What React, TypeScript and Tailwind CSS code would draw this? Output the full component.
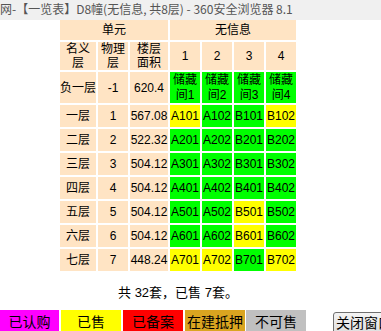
import React from "react";

type Cell = { t: string; c: "g" | "y" };

const rows: { n: string; p: string; a: string; cells: Cell[] }[] = [
  { n: "一层", p: "1", a: "567.08", cells: [{ t: "A101", c: "y" }, { t: "A102", c: "g" }, { t: "B101", c: "g" }, { t: "B102", c: "y" }] },
  { n: "二层", p: "2", a: "522.32", cells: [{ t: "A201", c: "g" }, { t: "A202", c: "g" }, { t: "B201", c: "g" }, { t: "B202", c: "g" }] },
  { n: "三层", p: "3", a: "504.12", cells: [{ t: "A301", c: "g" }, { t: "A302", c: "g" }, { t: "B301", c: "g" }, { t: "B302", c: "g" }] },
  { n: "四层", p: "4", a: "504.12", cells: [{ t: "A401", c: "g" }, { t: "A402", c: "g" }, { t: "B401", c: "g" }, { t: "B402", c: "g" }] },
  { n: "五层", p: "5", a: "504.12", cells: [{ t: "A501", c: "g" }, { t: "A502", c: "g" }, { t: "B501", c: "y" }, { t: "B502", c: "g" }] },
  { n: "六层", p: "6", a: "504.12", cells: [{ t: "A601", c: "g" }, { t: "A602", c: "g" }, { t: "B601", c: "y" }, { t: "B602", c: "g" }] },
  { n: "七层", p: "7", a: "448.24", cells: [{ t: "A701", c: "y" }, { t: "A702", c: "y" }, { t: "B701", c: "g" }, { t: "B702", c: "y" }] },
];

const peach = "bg-[#ffe4c4] flex items-center justify-center text-center whitespace-nowrap";

export default function App() {
  return (
    <div
      className="w-[381px] h-[331px] overflow-hidden bg-white text-black relative"
      style={{ fontFamily: '"Liberation Sans", "Noto Sans CJK SC", sans-serif' }}
    >
      <div className="h-[20px] bg-[#f0f0f0] text-[12px] leading-[17px] text-[#555] whitespace-nowrap" style={{ fontFamily: '"Noto Sans CJK SC", sans-serif' }}>
        网-【一览表】D8幢(无信息, 共8层) - 360安全浏览器 8.1
      </div>
      <div className="w-[356px] flex flex-col items-center">
        <div className="grid grid-cols-[36px_30px_38px_30px_30px_30px_30px] grid-rows-[20px_28px_31px_repeat(7,22px)] gap-[2px] text-[12px] leading-[14px]">
          <div className={`${peach} col-span-3`}>单元</div>
          <div className={`${peach} col-span-4`}>无信息</div>
          <div className={peach}>名义<br />层</div>
          <div className={peach}>物理<br />层</div>
          <div className={peach}>楼层<br />面积</div>
          <div className={peach}>1</div>
          <div className={peach}>2</div>
          <div className={peach}>3</div>
          <div className={peach}>4</div>
          <div className={peach}>负一层</div>
          <div className={peach}>-1</div>
          <div className={peach}>620.4</div>
          {[1, 2, 3, 4].map((i) => (
            <div key={i} className="bg-[#00ff00] flex items-center justify-center text-center leading-[15px]">
              储藏<br />间{i}
            </div>
          ))}
          {rows.map((r) => (
            <React.Fragment key={r.n}>
              <div className={peach}>{r.n}</div>
              <div className={peach}>{r.p}</div>
              <div className={peach}>{r.a}</div>
              {r.cells.map((c) => (
                <div
                  key={c.t}
                  className={`${c.c === "g" ? "bg-[#00ff00]" : "bg-[#ffff00]"} flex items-center justify-center whitespace-nowrap`}
                >
                  {c.t}
                </div>
              ))}
            </React.Fragment>
          ))}
        </div>
        <div className="mt-[14px] text-[13px] leading-[16px] whitespace-pre">共 32套，已售 7套。</div>
      </div>
      <div className="absolute left-0 top-[310px] flex items-start text-[14px] leading-[24px] whitespace-nowrap">
        <div className="w-[59px] h-[24px] bg-[#ff00ff] text-center">已认购</div>
        <div className="ml-[2px] w-[60px] h-[24px] bg-[#ffff00] text-center">已售</div>
        <div className="ml-[2px] w-[60px] h-[24px] bg-[#ff0000] text-center">已备案</div>
        <div className="ml-[2px] w-[60px] h-[24px] bg-[#daa520] text-center">在建抵押</div>
        <div className="ml-[1px] w-[60px] h-[24px] bg-[#c0c0c0] text-center">不可售</div>
        <div className="ml-[27px] mt-[2px] w-[62px] h-[24px] border border-[#707070] rounded-[3px] bg-gradient-to-b from-[#f4f4f4] to-[#dcdcdc] text-center leading-[20px]">
          关闭窗口
        </div>
      </div>
    </div>
  );
}
